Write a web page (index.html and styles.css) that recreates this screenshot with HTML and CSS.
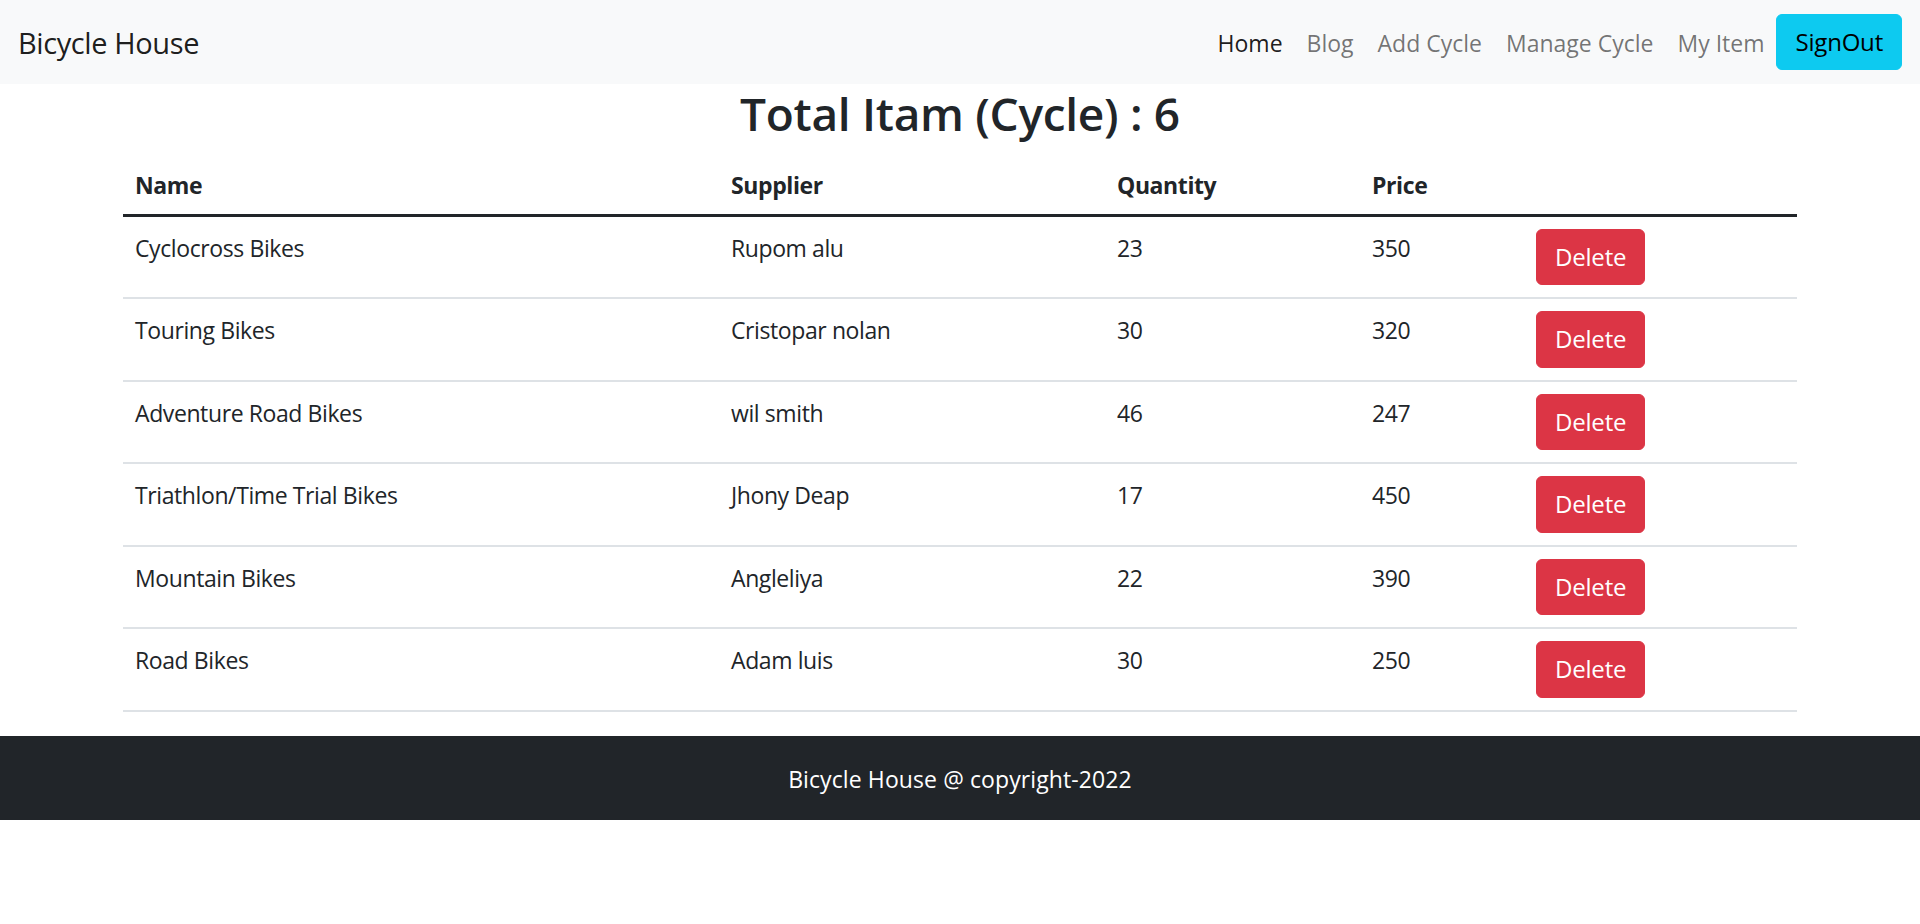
FILE: index.html
```html
<!DOCTYPE html>
<html lang="en">
<head>
<meta charset="utf-8">
<title>Bicycle House</title>
<link rel="stylesheet" href="styles.css">
</head>
<body>
<nav class="navbar">
  <a class="brand" href="#">Bicycle House</a>
  <div class="nav-menu">
    <a class="nav-link active" href="#">Home</a>
    <a class="nav-link" href="#">Blog</a>
    <a class="nav-link" href="#">Add Cycle</a>
    <a class="nav-link" href="#">Manage Cycle</a>
    <a class="nav-link" href="#">My Item</a>
    <button class="btn btn-info" type="button">SignOut</button>
  </div>
</nav>

<main class="container">
  <h2 class="page-title">Total Itam (Cycle) : 6</h2>
  <table class="table">
    <colgroup>
      <col class="col-name">
      <col class="col-supplier">
      <col class="col-qty">
      <col class="col-price">
      <col class="col-action">
    </colgroup>
    <thead>
      <tr>
        <th>Name</th>
        <th>Supplier</th>
        <th>Quantity</th>
        <th>Price</th>
        <th></th>
      </tr>
    </thead>
    <tbody>
      <tr>
        <td>Cyclocross Bikes</td>
        <td>Rupom alu</td>
        <td>23</td>
        <td>350</td>
        <td><button class="btn btn-danger" type="button">Delete</button></td>
      </tr>
      <tr>
        <td>Touring Bikes</td>
        <td>Cristopar nolan</td>
        <td>30</td>
        <td>320</td>
        <td><button class="btn btn-danger" type="button">Delete</button></td>
      </tr>
      <tr>
        <td>Adventure Road Bikes</td>
        <td>wil smith</td>
        <td>46</td>
        <td>247</td>
        <td><button class="btn btn-danger" type="button">Delete</button></td>
      </tr>
      <tr>
        <td>Triathlon/Time Trial Bikes</td>
        <td>Jhony Deap</td>
        <td>17</td>
        <td>450</td>
        <td><button class="btn btn-danger" type="button">Delete</button></td>
      </tr>
      <tr>
        <td>Mountain Bikes</td>
        <td>Angleliya</td>
        <td>22</td>
        <td>390</td>
        <td><button class="btn btn-danger" type="button">Delete</button></td>
      </tr>
      <tr>
        <td>Road Bikes</td>
        <td>Adam luis</td>
        <td>30</td>
        <td>250</td>
        <td><button class="btn btn-danger" type="button">Delete</button></td>
      </tr>
    </tbody>
  </table>
</main>

<footer class="footer">
  <p class="footer-text">Bicycle House @ copyright-2022</p>
</footer>
</body>
</html>
```

FILE: styles.css
```css
* {
  box-sizing: border-box;
}

html, body {
  margin: 0;
  padding: 0;
}

body {
  font-family: "Open Sans", "Noto Sans", "Liberation Sans", sans-serif;
  font-size: 23px;
  letter-spacing: -0.4px;
  line-height: 36px;
  color: #212529;
  background: #fff;
}

a {
  text-decoration: none;
}

/* Navbar */
.navbar {
  display: flex;
  align-items: center;
  justify-content: space-between;
  height: 84px;
  padding: 12px 18px;
  background: #f8f9fa;
}

.brand {
  font-size: 29px;
  line-height: 45px;
  padding: 8px 0 7px;
  color: rgba(0, 0, 0, 0.9);
}

.nav-menu {
  display: flex;
  align-items: center;
}

.nav-link {
  padding: 13px 12px 11px;
  line-height: 36px;
  letter-spacing: 0;
  color: rgba(0, 0, 0, 0.55);
}

.nav-link.active {
  color: rgba(0, 0, 0, 0.9);
}

/* Buttons */
.btn {
  font-family: inherit;
  font-size: 24px;
  letter-spacing: -0.2px;
  line-height: 36px;
  padding: 9px 18px 9.5px;
  border: 1px solid transparent;
  border-radius: 6px;
  cursor: pointer;
}

.btn-info {
  background: #0dcaf0;
  border-color: #0dcaf0;
  color: #000;
}

.btn-danger {
  background: #dc3545;
  border-color: #dc3545;
  color: #fff;
  margin: -1px 0 1px;
}

/* Main */
.container {
  max-width: 1710px;
  margin: 0 auto;
  padding: 0 18px;
}

.page-title {
  margin: 0 0 11px;
  padding-top: 1px;
  font-size: 46px;
  letter-spacing: -0.3px;
  line-height: 57.6px;
  font-weight: 600;
  text-align: center;
}

.table {
  width: 100%;
  border-collapse: collapse;
  table-layout: fixed;
  margin-bottom: 24px;
}

.col-name { width: 596px; }
.col-supplier { width: 386px; }
.col-qty { width: 255px; }
.col-price { width: 164px; }
.col-action { width: 273px; }

.table th,
.table td {
  padding: 13px 12px 11px;
  text-align: left;
  vertical-align: top;
  border-bottom: 2px solid #dee2e6;
}

.table th {
  font-weight: 700;
  border-bottom: 3px solid #212529;
}

/* Footer */
.footer {
  background: #212529;
  color: #fff;
  padding: 25px 0 23px;
  text-align: center;
}

.footer-text {
  margin: 0;
  letter-spacing: 0.1px;
}
```
